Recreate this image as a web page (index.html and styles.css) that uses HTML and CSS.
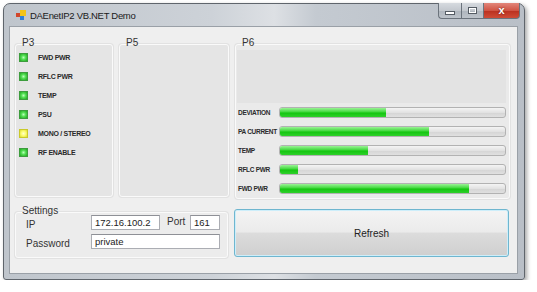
FILE: index.html
```html
<!DOCTYPE html>
<html lang="en">
<head>
  <meta charset="UTF-8">
  <title>DAEnetIP2 VB.NET Demo</title>
  <link rel="stylesheet" href="styles.css">
</head>
<body>
  <div class="window">
    <div class="titlebar">
      <svg class="app-icon" width="10" height="10" viewBox="0 0 10 10">
        <rect x="0" y="3" width="4" height="4" fill="#d2462a"/>
        <rect x="4" y="0" width="6" height="6" fill="#f2c318"/>
        <rect x="4" y="6" width="4" height="4" fill="#2f7fd6"/>
      </svg>
      <span class="title">DAEnetIP2 VB.NET Demo</span>
      <div class="caption">
        <div class="cbtn min"><span></span></div>
        <div class="cbtn max"><span></span></div>
        <div class="cbtn close">x</div>
      </div>
    </div>

    <div class="client">
      <div class="top-row">
        <div class="group p3">
          <div class="group-title">P3</div>
          <div class="group-box">
            <div class="led-row"><span class="led"></span>FWD PWR</div>
            <div class="led-row"><span class="led"></span>RFLC PWR</div>
            <div class="led-row"><span class="led"></span>TEMP</div>
            <div class="led-row"><span class="led"></span>PSU</div>
            <div class="led-row"><span class="led yellow"></span>MONO / STEREO</div>
            <div class="led-row"><span class="led"></span>RF ENABLE</div>
          </div>
        </div>
        <div class="group p5">
          <div class="group-title">P5</div>
          <div class="group-box"></div>
        </div>
        <div class="group p6">
          <div class="group-title">P6</div>
          <div class="group-box">
            <div class="p6-panel"></div>
            <div class="bar-row"><span class="bar-label">DEVIATION</span><div class="bar"><div class="fill" style="width:47%"></div></div></div>
            <div class="bar-row"><span class="bar-label">PA CURRENT</span><div class="bar"><div class="fill" style="width:66%"></div></div></div>
            <div class="bar-row"><span class="bar-label">TEMP</span><div class="bar"><div class="fill" style="width:39%"></div></div></div>
            <div class="bar-row"><span class="bar-label">RFLC PWR</span><div class="bar"><div class="fill" style="width:8%"></div></div></div>
            <div class="bar-row"><span class="bar-label">FWD PWR</span><div class="bar"><div class="fill" style="width:84%"></div></div></div>
          </div>
        </div>
      </div>

      <div class="bottom-row">
        <div class="group settings">
          <div class="group-title">Settings</div>
          <div class="group-box">
            <div class="field-row">
              <span class="field-label">IP</span>
              <input class="textbox ip" type="text" value="172.16.100.2">
              <span class="port-label">Port</span>
              <input class="textbox port" type="text" value="161">
            </div>
            <div class="field-row">
              <span class="field-label">Password</span>
              <input class="textbox pass" type="text" value="private">
            </div>
          </div>
        </div>
        <button class="refresh">Refresh</button>
      </div>
    </div>
  </div>
</body>
</html>
```

FILE: styles.css
```css
body {
  margin: 0;
  background: #fff;
  font-family: 'Liberation Sans', Arial, sans-serif;
  color: #222;
}
.window {
  margin: 3px 0 0 3px;
  width: 522px;
  height: 277px;
  box-sizing: border-box;
  border: 1px solid #5f656c;
  border-radius: 7px 7px 3px 3px;
  background: linear-gradient(90deg, #bfc5cc 0%, #cdd2d8 40%, #dde0e4 52%, #c4cad1 60%, #b9bfc7 100%);
  box-shadow: 2px 2px 4px rgba(0, 0, 0, 0.35);
  display: flex;
  flex-direction: column;
}
.titlebar {
  height: 22px;
  display: flex;
  align-items: center;
  padding: 0 4px 0 12px;
}
.app-icon {
  margin-right: 4px;
}
.title {
  font-size: 9.5px;
  color: #1a1a1a;
  letter-spacing: -0.3px;
}
.caption {
  margin-left: auto;
  align-self: flex-start;
  margin-top: -1px;
  display: flex;
}
.cbtn {
  height: 16px;
  border: 1px solid #6b737c;
  border-top: none;
  box-sizing: border-box;
  display: flex;
  align-items: center;
  justify-content: center;
}
.min, .max {
  width: 23px;
  background: linear-gradient(#d6dadf, #c3c8ce 50%, #aeb5bd 51%, #bdc3ca);
}
.min {
  border-radius: 0 0 0 4px;
  border-right: none;
}
.min span {
  width: 8px;
  height: 2px;
  background: #fff;
  border: 1px solid #555c64;
  margin-top: 4px;
}
.max span {
  width: 7px;
  height: 5px;
  border: 1px solid #555c64;
  box-shadow: inset 0 0 0 1px #fff;
}
.close {
  width: 36px;
  border-left: none;
  border-radius: 0 0 4px 0;
  background: linear-gradient(#e2867a, #d05444 50%, #b9301f 51%, #cf4b36);
  color: #fff;
  font-weight: bold;
  font-size: 11px;
  line-height: 11px;
  text-shadow: 0 0 2px #5a150c;
}
.client {
  flex: 1;
  margin: 0 6px 5px 5px;
  background: #efefef;
  border: 1px solid #9aa0a7;
  padding: 10px 7px 0 5px;
  display: flex;
  flex-direction: column;
}
.top-row {
  display: flex;
  gap: 6px;
  height: 162px;
}
.group {
  display: flex;
  flex-direction: column;
}
.group-title {
  position: relative;
  z-index: 1;
  font-size: 10px;
  line-height: 12px;
  height: 12px;
  padding-left: 7px;
  color: #333;
}
.group-box {
  flex: 1;
  margin-top: -5px;
  background: #e5e5e5;
  border: 1px solid #fafafa;
  border-radius: 3px;
  box-shadow: 0 0 0 1px #e2e2e2;
}
.p3 {
  width: 98px;
}
.p3 .group-box {
  padding-top: 3px;
}
.p5 {
  width: 110px;
}
.p6 {
  width: 275px;
}
.p3, .p5 {
  margin-bottom: 2px;
}
.led-row {
  height: 19px;
  display: flex;
  align-items: center;
  padding-left: 3px;
  font-size: 7px;
  font-weight: bold;
  letter-spacing: -0.3px;
  color: #2a2a2a;
}
.led {
  width: 7px;
  height: 7px;
  border: 1px solid #3d9c3d;
  background: radial-gradient(circle, #b8ffb8 0, #4fdc4f 45%, #22a522 100%);
  margin-right: 10px;
}
.led.yellow {
  border-color: #c9c92a;
  background: radial-gradient(circle, #ffffd0 0, #fbfb6a 50%, #dada30 100%);
}
.p6 .group-box {
  padding: 5px 3px 0 1px;
  background: #eaeaea;
}
.p6-panel {
  height: 53px;
  background: #e3e3e3;
}
.bar-row {
  height: 19px;
  display: flex;
  align-items: center;
  padding-left: 1px;
}
.bar-label {
  width: 41px;
  font-size: 6.5px;
  font-weight: bold;
  letter-spacing: -0.3px;
  white-space: nowrap;
  color: #2a2a2a;
}
.bar {
  flex: 1;
  height: 11px;
  box-sizing: border-box;
  border: 1px solid #b2b2b2;
  border-radius: 3px;
  background: linear-gradient(#f4f4f4, #e2e2e2 50%, #d4d4d4 51%, #e0e0e0);
  overflow: hidden;
}
.fill {
  height: 100%;
  background: linear-gradient(#9af396, #40d83c 45%, #14c510 55%, #2fd02b);
}
.bottom-row {
  display: flex;
  gap: 6px;
  margin-top: 6px;
}
.settings {
  width: 213px;
  height: 53px;
}
.settings .group-title {
  padding-left: 7px;
  font-size: 10px;
}
.settings .group-box {
  background: #ececec;
  padding: 2px 0 0 10px;
}
.field-row {
  display: flex;
  height: 15px;
  margin-bottom: 4px;
  font-size: 10px;
}
.field-label {
  width: 65px;
  padding-top: 4px;
  color: #333;
}
.port-label {
  width: 23px;
  margin-left: 7px;
  padding-top: 1px;
  color: #333;
}
.textbox {
  box-sizing: border-box;
  height: 15px;
  margin: 0;
  padding: 0 3px;
  border: 1px solid #abadb3;
  border-top-color: #8e9096;
  background: #fff;
  font-family: 'Liberation Sans', Arial, sans-serif;
  font-size: 9.5px;
  color: #222;
}
.ip {
  width: 69px;
}
.port {
  width: 30px;
}
.pass {
  width: 129px;
}
.refresh {
  width: 275px;
  height: 48px;
  margin-top: 4px;
  border: 1px solid #6fb6cf;
  border-radius: 3px;
  box-shadow: inset 0 0 0 1px #cdeefa;
  background: linear-gradient(#f4f4f4, #ebebeb 48%, #dcdcdc 50%, #cfcfcf);
  font-family: 'Liberation Sans', Arial, sans-serif;
  font-size: 10px;
  color: #222;
}
```
